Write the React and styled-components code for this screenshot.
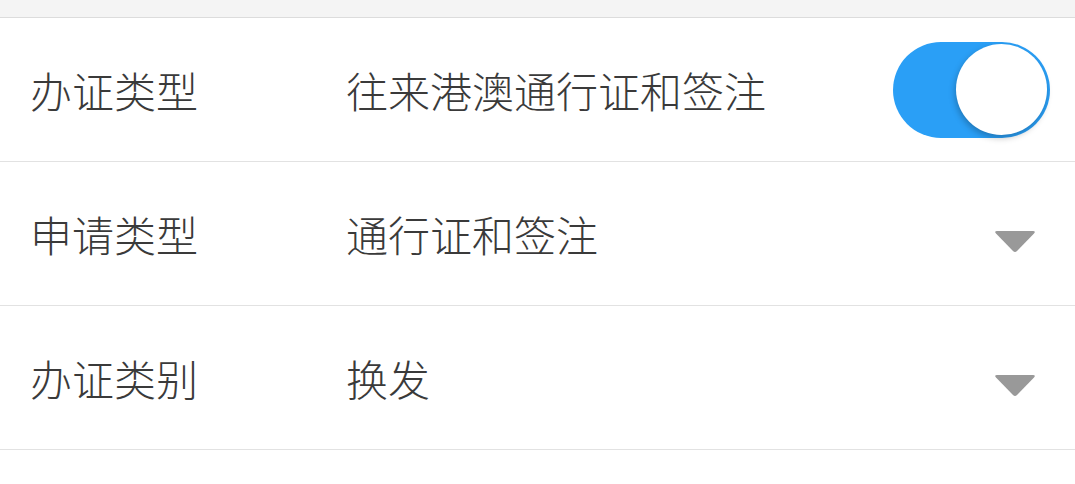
import React from "react";
import styled, { createGlobalStyle } from "styled-components";

const Global = createGlobalStyle`
  html, body { margin: 0; padding: 0; background: #fff; }
  body { font-family: "Noto Sans CJK SC", "Noto Sans", sans-serif; }
`;

const Page = styled.div`
  width: 1075px;
  min-height: 484px;
  background: #fff;
`;

const TopBand = styled.div`
  height: 17px;
  background: #f4f4f4;
  border-bottom: 1px solid #dcdcdc;
`;

const Row = styled.div`
  display: flex;
  align-items: center;
  height: 143px;
  border-bottom: 1px solid #e2e2e2;
  padding: 0 ${(p) => p.$pr}px 0 30px;
  box-sizing: content-box;
`;

const Label = styled.div`
  width: 316px;
  flex: none;
  font-size: 42px;
  font-weight: 300;
  line-height: 1;
  color: #3a3a3a;
`;

const Value = styled(Label)`
  width: auto;
  flex: 1;
`;

const Track = styled.div`
  position: relative;
  width: 157px;
  height: 96px;
  border-radius: 48px;
  background: #2a9ff6;
  flex: none;
`;

const Knob = styled.div`
  position: absolute;
  right: 3px;
  top: 2px;
  width: 91px;
  height: 91px;
  border-radius: 50%;
  background: #fff;
  box-shadow: -1px 3px 6px rgba(0, 0, 0, 0.25);
`;

const Caret = styled.svg`
  width: 42px;
  height: 23px;
  flex: none;
  display: block;
  margin-top: 15px;
`;

const Arrow = () => (
  <Caret viewBox="0 0 42 23">
    <path
      d="M3 1 H39 Q42 1 40 3.5 L23 21 Q21 23 19 21 L2 3.5 Q0 1 3 1 Z"
      fill="#999"
    />
  </Caret>
);

export default function App() {
  return (
    <Page>
      <Global />
      <TopBand />
      <Row $pr={25}>
        <Label>办证类型</Label>
        <Value>往来港澳通行证和签注</Value>
        <Track>
          <Knob />
        </Track>
      </Row>
      <Row $pr={39}>
        <Label>申请类型</Label>
        <Value>通行证和签注</Value>
        <Arrow />
      </Row>
      <Row $pr={39}>
        <Label>办证类别</Label>
        <Value>换发</Value>
        <Arrow />
      </Row>
    </Page>
  );
}
